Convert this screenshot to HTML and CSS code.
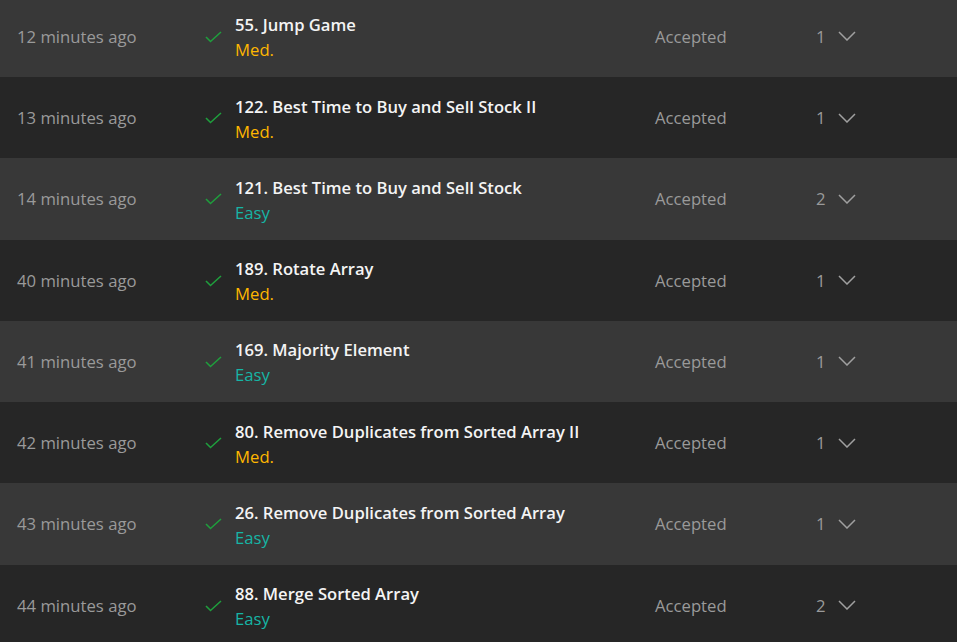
FILE: index.html
```html
<!DOCTYPE html>
<html>
<head>
<meta charset="utf-8">
<link rel="stylesheet" href="styles.css">
</head>
<body>
<div class="list">
  <div class="row alt">
    <div class="time">12 minutes ago</div>
    <div class="check"><svg width="17" height="12" viewBox="0 0 17 12"><path d="M1 6 L5.5 10.5 L16 1" fill="none" stroke="#1f9e3d" stroke-width="1.6"/></svg></div>
    <div class="prob"><div class="title">55. Jump Game</div><div class="diff med">Med.</div></div>
    <div class="status">Accepted</div>
    <div class="count">1</div>
    <div class="chev"><svg width="18" height="10" viewBox="0 0 18 10"><path d="M1 1 L9 9 L17 1" fill="none" stroke="#a0a0a0" stroke-width="1.5"/></svg></div>
  </div>
  <div class="row">
    <div class="time">13 minutes ago</div>
    <div class="check"><svg width="17" height="12" viewBox="0 0 17 12"><path d="M1 6 L5.5 10.5 L16 1" fill="none" stroke="#1f9e3d" stroke-width="1.6"/></svg></div>
    <div class="prob"><div class="title">122. Best Time to Buy and Sell Stock II</div><div class="diff med">Med.</div></div>
    <div class="status">Accepted</div>
    <div class="count">1</div>
    <div class="chev"><svg width="18" height="10" viewBox="0 0 18 10"><path d="M1 1 L9 9 L17 1" fill="none" stroke="#a0a0a0" stroke-width="1.5"/></svg></div>
  </div>
  <div class="row alt">
    <div class="time">14 minutes ago</div>
    <div class="check"><svg width="17" height="12" viewBox="0 0 17 12"><path d="M1 6 L5.5 10.5 L16 1" fill="none" stroke="#1f9e3d" stroke-width="1.6"/></svg></div>
    <div class="prob"><div class="title">121. Best Time to Buy and Sell Stock</div><div class="diff easy">Easy</div></div>
    <div class="status">Accepted</div>
    <div class="count">2</div>
    <div class="chev"><svg width="18" height="10" viewBox="0 0 18 10"><path d="M1 1 L9 9 L17 1" fill="none" stroke="#a0a0a0" stroke-width="1.5"/></svg></div>
  </div>
  <div class="row">
    <div class="time">40 minutes ago</div>
    <div class="check"><svg width="17" height="12" viewBox="0 0 17 12"><path d="M1 6 L5.5 10.5 L16 1" fill="none" stroke="#1f9e3d" stroke-width="1.6"/></svg></div>
    <div class="prob"><div class="title">189. Rotate Array</div><div class="diff med">Med.</div></div>
    <div class="status">Accepted</div>
    <div class="count">1</div>
    <div class="chev"><svg width="18" height="10" viewBox="0 0 18 10"><path d="M1 1 L9 9 L17 1" fill="none" stroke="#a0a0a0" stroke-width="1.5"/></svg></div>
  </div>
  <div class="row alt">
    <div class="time">41 minutes ago</div>
    <div class="check"><svg width="17" height="12" viewBox="0 0 17 12"><path d="M1 6 L5.5 10.5 L16 1" fill="none" stroke="#1f9e3d" stroke-width="1.6"/></svg></div>
    <div class="prob"><div class="title">169. Majority Element</div><div class="diff easy">Easy</div></div>
    <div class="status">Accepted</div>
    <div class="count">1</div>
    <div class="chev"><svg width="18" height="10" viewBox="0 0 18 10"><path d="M1 1 L9 9 L17 1" fill="none" stroke="#a0a0a0" stroke-width="1.5"/></svg></div>
  </div>
  <div class="row">
    <div class="time">42 minutes ago</div>
    <div class="check"><svg width="17" height="12" viewBox="0 0 17 12"><path d="M1 6 L5.5 10.5 L16 1" fill="none" stroke="#1f9e3d" stroke-width="1.6"/></svg></div>
    <div class="prob"><div class="title">80. Remove Duplicates from Sorted Array II</div><div class="diff med">Med.</div></div>
    <div class="status">Accepted</div>
    <div class="count">1</div>
    <div class="chev"><svg width="18" height="10" viewBox="0 0 18 10"><path d="M1 1 L9 9 L17 1" fill="none" stroke="#a0a0a0" stroke-width="1.5"/></svg></div>
  </div>
  <div class="row alt">
    <div class="time">43 minutes ago</div>
    <div class="check"><svg width="17" height="12" viewBox="0 0 17 12"><path d="M1 6 L5.5 10.5 L16 1" fill="none" stroke="#1f9e3d" stroke-width="1.6"/></svg></div>
    <div class="prob"><div class="title">26. Remove Duplicates from Sorted Array</div><div class="diff easy">Easy</div></div>
    <div class="status">Accepted</div>
    <div class="count">1</div>
    <div class="chev"><svg width="18" height="10" viewBox="0 0 18 10"><path d="M1 1 L9 9 L17 1" fill="none" stroke="#a0a0a0" stroke-width="1.5"/></svg></div>
  </div>
  <div class="row">
    <div class="time">44 minutes ago</div>
    <div class="check"><svg width="17" height="12" viewBox="0 0 17 12"><path d="M1 6 L5.5 10.5 L16 1" fill="none" stroke="#1f9e3d" stroke-width="1.6"/></svg></div>
    <div class="prob"><div class="title">88. Merge Sorted Array</div><div class="diff easy">Easy</div></div>
    <div class="status">Accepted</div>
    <div class="count">2</div>
    <div class="chev"><svg width="18" height="10" viewBox="0 0 18 10"><path d="M1 1 L9 9 L17 1" fill="none" stroke="#a0a0a0" stroke-width="1.5"/></svg></div>
  </div>
</div>
</body>
</html>
```
FILE: styles.css
```css
html, body {
  margin: 0;
  padding: 0;
  background: #262626;
  overflow: hidden;
}
body {
  font-family: "Open Sans", "Noto Sans", sans-serif;
  font-size: 16.7px;
  color: #9c9c9c;
}
.list {
  margin-top: -4.25px;
}
.row {
  display: flex;
  align-items: center;
  height: 81.25px;
  padding-left: 17px;
  background: #262626;
}
.row.alt {
  background: #383838;
}
.time {
  width: 188px;
  flex: none;
  color: #9a9a9a;
}
.check {
  width: 30px;
  flex: none;
  display: flex;
  align-items: center;
  padding-top: 1px;
}
.prob {
  width: 420px;
  flex: none;
  display: flex;
  flex-direction: column;
  padding-top: 2px;
}
.title {
  color: #f4f4f4;
  font-weight: 600;
  font-size: 16.6px;
  line-height: 25px;
}
.diff {
  line-height: 25px;
}
.diff.med { color: #ffb700; }
.diff.easy { color: #16b5a5; }
.status {
  width: 161px;
  flex: none;
  color: #9a9a9a;
}
.count {
  width: 22px;
  flex: none;
  color: #9a9a9a;
}
.chev {
  display: flex;
  align-items: center;
}
```
